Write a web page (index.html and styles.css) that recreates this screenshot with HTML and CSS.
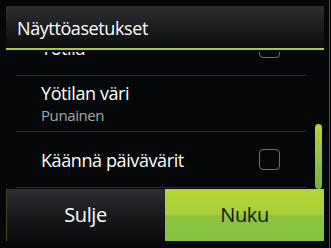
FILE: index.html
```html
<!DOCTYPE html>
<html lang="fi">
<head>
    <meta charset="UTF-8">
    <meta name="viewport" content="width=device-width, initial-scale=1.0">
    <title>Näyttöasetukset</title>
    <link rel="stylesheet" href="styles.css">
</head>
<body>
    <div class="screen">
        <div class="dialog">
            <!-- Otsikko -->
            <div class="dialog-header">Näyttöasetukset</div>

            <!-- Asetuslista -->
            <div class="dialog-body">
                <div class="list">
                    <div class="list-inner">
                        <div class="item">
                            <div class="label">
                                <div class="title">Yötila</div>
                            </div>
                            <span class="checkbox"></span>
                        </div>
                        <div class="item">
                            <div class="label">
                                <div class="title">Yötilan väri</div>
                                <div class="sub">Punainen</div>
                            </div>
                        </div>
                        <div class="item">
                            <div class="label">
                                <div class="title">Käännä päivävärit</div>
                            </div>
                            <span class="checkbox"></span>
                        </div>
                    </div>
                </div>
                <div class="scrollbar">
                    <div class="thumb"></div>
                </div>
            </div>

            <!-- Painikkeet -->
            <div class="dialog-actions">
                <button class="btn btn-dark">Sulje</button>
                <button class="btn btn-green">Nuku</button>
            </div>
        </div>
    </div>
</body>
</html>
```

FILE: styles.css
```css
body {
    margin: 0;
    padding: 0;
    background: #050708;
    font-family: "Open Sans", "Noto Sans", sans-serif;
}
.screen {
    width: 330px;
    height: 248px;
    border-right: 1px solid #4a4c4e;
    padding: 6px 5px 0 6px;
    box-sizing: border-box;
}
.dialog {
    display: flex;
    flex-direction: column;
}
.dialog-header {
    height: 40px;
    padding: 2px 0 0 11px;
    line-height: 40px;
    font-size: 18px;
    letter-spacing: -0.4px;
    color: #ffffff;
    background: linear-gradient(#2c2f32, #0b0c0d);
    border-bottom: 2px solid #a9cc32;
}
.dialog-body {
    display: flex;
    height: 137px;
    padding-top: 2px;
}
.list {
    flex: 1;
    margin-left: 10px;
    overflow: hidden;
}
.list-inner {
    margin-top: -32px;
}
.item {
    display: flex;
    align-items: center;
    height: 55px;
    padding: 0 26px 0 25px;
    border-bottom: 1px solid #2b3418;
}
.label {
    flex: 1;
}
.title {
    font-size: 18px;
    line-height: 20px;
    letter-spacing: -0.4px;
    color: #ffffff;
}
.sub {
    margin-top: 3px;
    font-size: 15px;
    line-height: 18px;
    letter-spacing: -0.4px;
    color: #a8a8a8;
}
.checkbox {
    width: 19px;
    height: 19px;
    border: 1.5px solid #6f7173;
    border-radius: 4px;
}
.scrollbar {
    display: flex;
    flex-direction: column;
    justify-content: flex-end;
    width: 7px;
    margin: 0 2px 0 9px;
}
.thumb {
    height: 65px;
    border-radius: 4px;
    background: linear-gradient(#b3d338, #78b23e);
}
.dialog-actions {
    display: flex;
    height: 52px;
}
.btn {
    flex: 1;
    border: none;
    margin: 0;
    padding: 0;
    font-family: inherit;
    font-size: 20px;
    line-height: 52px;
    letter-spacing: -0.4px;
}
.btn-dark {
    color: #ffffff;
    background: linear-gradient(#2c2f33, #181a1c 50%, #0b0c0d);
    box-shadow: inset 1px 0 0 #3d4a1c;
}
.btn-green {
    color: #141414;
    background: linear-gradient(#b6d535, #a8ce38 48%, #8ac43f 52%, #87c240);
}
```
